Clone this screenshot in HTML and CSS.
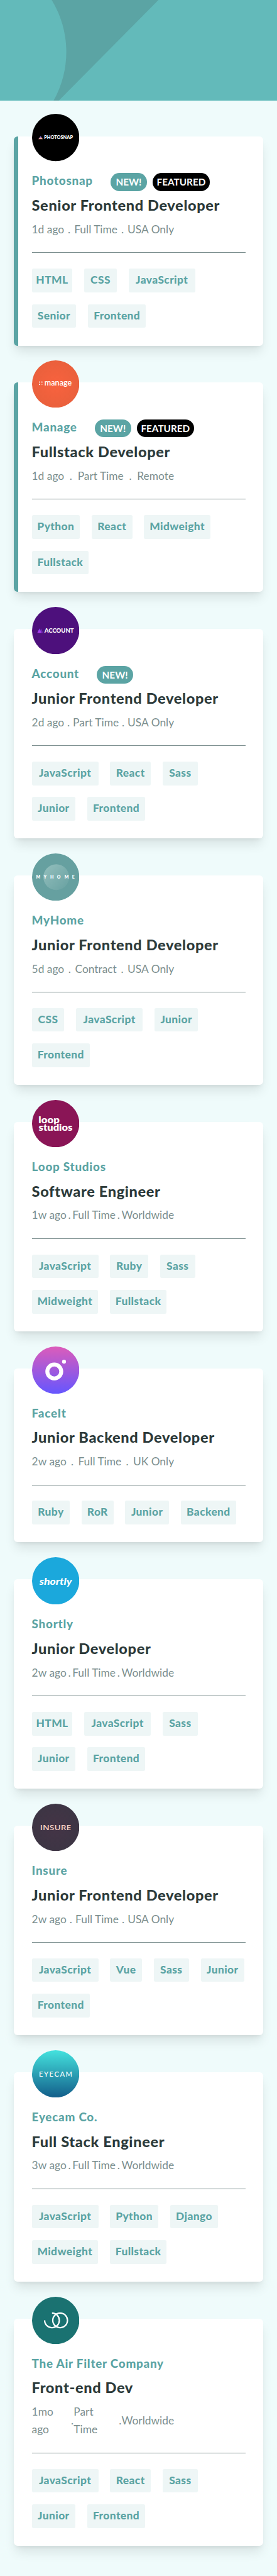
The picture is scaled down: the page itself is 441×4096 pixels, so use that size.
FILE: index.html
```html
<!DOCTYPE html>
<html lang="en">
<head>
<meta charset="utf-8">
<title>Job listings</title>
<link rel="stylesheet" href="styles.css">
</head>
<body>
<header class="hero">
  <svg class="hero-art" viewBox="0 0 750 272" preserveAspectRatio="none"><path d="M140 0A268.5 268.5 0 0 1 145 272H159L429 0Z" fill="#5ba4a4"/></svg>
</header>
<main class="list">

<article class="card featured">
  <svg class="logo" viewBox="0 0 128 128">
    <defs><linearGradient id="ps" x1="0" y1="0" x2="0.3" y2="1"><stop offset=".2" stop-color="#5a6ee0"/><stop offset=".6" stop-color="#b678c0"/><stop offset="1" stop-color="#ffb58a"/></linearGradient></defs>
    <circle cx="64" cy="64" r="64"/><path d="M17.3 68.3L23.2 59.8L29 68.3Z" fill="url(#ps)"/>
    <text class="lt" x="32.6" y="68.3" font-size="12.4" font-weight="900" textLength="78" lengthAdjust="spacingAndGlyphs">PHOTOSNAP</text>
  </svg>
  <div class="company"><span class="name">Photosnap</span><span class="badge new">NEW!</span><span class="badge hot">FEATURED</span></div>
  <h2 class="title">Senior Frontend Developer</h2>
  <div class="meta"><span>1d ago</span><span>.</span><span>Full Time</span><span>.</span><span>USA Only</span></div>
  <div class="tags"><span class="tag html">HTML</span><span class="tag css">CSS</span><span class="tag js">JavaScript</span><span class="tag senior">Senior</span><span class="tag front">Frontend</span></div>
</article>

<article class="card featured">
  <svg class="logo" viewBox="0 0 128 128">
    <defs><radialGradient id="mg"><stop offset="0" stop-color="#f8623e"/><stop offset="1" stop-color="#ea603c"/></radialGradient></defs>
    <circle cx="64" cy="64" r="64" fill="url(#mg)"/>
    <g fill="#fff"><circle cx="20.5" cy="58.5" r="1.7"/><circle cx="26.8" cy="58.5" r="1.7"/><circle cx="20.5" cy="65" r="1.7"/><circle cx="26.8" cy="65" r="1.7" opacity=".5"/></g>
    <text class="lt" x="33.6" y="67.5" font-size="23" font-weight="600" textLength="74" lengthAdjust="spacingAndGlyphs">manage</text>
  </svg>
  <div class="company"><span class="name">Manage</span><span class="badge new">NEW!</span><span class="badge hot">FEATURED</span></div>
  <h2 class="title">Fullstack Developer</h2>
  <div class="meta"><span>1d ago</span><span>.</span><span>Part Time</span><span>.</span><span>Remote</span></div>
  <div class="tags"><span class="tag python">Python</span><span class="tag react">React</span><span class="tag mid">Midweight</span><span class="tag full">Fullstack</span></div>
</article>

<article class="card">
  <svg class="logo" viewBox="0 0 128 128">
    <defs><linearGradient id="ac" x1="0" y1="0" x2="0" y2="1"><stop offset="0" stop-color="#7b3df0"/><stop offset="1" stop-color="#b53cf0"/></linearGradient></defs>
    <circle cx="64" cy="64" r="64" fill="#4d107c"/>
    <path d="M19 70L24.5 58.3L30 70Z" fill="#6a2bb0"/><path d="M14.3 70L20 58.3L25.5 70Z" fill="url(#ac)"/>
    <text class="lt" x="33.6" y="69.9" font-size="16.4" font-weight="900" textLength="79.5" lengthAdjust="spacingAndGlyphs">ACCOUNT</text>
  </svg>
  <div class="company"><span class="name">Account</span><span class="badge new">NEW!</span></div>
  <h2 class="title">Junior Frontend Developer</h2>
  <div class="meta"><span>2d ago</span><span>.</span><span>Part Time</span><span>.</span><span>USA Only</span></div>
  <div class="tags"><span class="tag js">JavaScript</span><span class="tag react">React</span><span class="tag sass">Sass</span><span class="tag junior">Junior</span><span class="tag front">Frontend</span></div>
</article>

<article class="card">
  <svg class="logo" viewBox="0 0 128 128">
    <defs><linearGradient id="mh" x1="0" y1="0" x2="1" y2="1"><stop offset="0" stop-color="#94bfbd"/><stop offset="1" stop-color="#68a1a1"/></linearGradient></defs>
    <circle cx="64" cy="64" r="64" fill="#66a0a0"/><circle cx="65.5" cy="64" r="34.8" fill="url(#mh)"/>
    <text class="lt" x="11 31.5 49.5 67.5 88 108.5" y="68.3" font-size="11.7" font-weight="800">MYHOME</text>
  </svg>
  <div class="company"><span class="name">MyHome</span></div>
  <h2 class="title">Junior Frontend Developer</h2>
  <div class="meta"><span>5d ago</span><span>.</span><span>Contract</span><span>.</span><span>USA Only</span></div>
  <div class="tags"><span class="tag css">CSS</span><span class="tag js">JavaScript</span><span class="tag junior">Junior</span><span class="tag front">Frontend</span></div>
</article>

<article class="card">
  <svg class="logo" viewBox="0 0 128 128">
    <circle cx="64" cy="64" r="64" fill="#8a1556"/>
    <text class="lt" x="17.5" y="63.3" font-size="27" font-weight="800" textLength="57" lengthAdjust="spacingAndGlyphs">loop</text>
    <text class="lt" x="18" y="83.8" font-size="27" font-weight="800" textLength="91.5" lengthAdjust="spacingAndGlyphs">studios</text>
  </svg>
  <div class="company"><span class="name">Loop Studios</span></div>
  <h2 class="title">Software Engineer</h2>
  <div class="meta"><span>1w ago</span><span>.</span><span>Full Time</span><span>.</span><span>Worldwide</span></div>
  <div class="tags"><span class="tag js">JavaScript</span><span class="tag ruby">Ruby</span><span class="tag sass">Sass</span><span class="tag mid">Midweight</span><span class="tag full">Fullstack</span></div>
</article>

<article class="card">
  <svg class="logo" viewBox="0 0 128 128">
    <defs><linearGradient id="fi" x1="0" y1="0" x2="0" y2="1"><stop offset="0" stop-color="#dc5cba"/><stop offset="1" stop-color="#6556ff"/></linearGradient></defs>
    <circle cx="64" cy="64" r="64" fill="url(#fi)"/><circle cx="60.2" cy="67.6" r="18.8" fill="none" stroke="#fff" stroke-width="10.7"/><circle cx="86.6" cy="41.2" r="5.3" fill="#fff"/>
  </svg>
  <div class="company"><span class="name">FaceIt</span></div>
  <h2 class="title">Junior Backend Developer</h2>
  <div class="meta"><span>2w ago</span><span>.</span><span>Full Time</span><span>.</span><span>UK Only</span></div>
  <div class="tags"><span class="tag ruby">Ruby</span><span class="tag ror">RoR</span><span class="tag junior">Junior</span><span class="tag back">Backend</span></div>
</article>

<article class="card">
  <svg class="logo" viewBox="0 0 128 128">
    <circle cx="64" cy="64" r="64" fill="#1ba8dc"/>
    <text class="lt" x="20" y="74.2" font-size="25" font-weight="900" font-style="italic" textLength="88" lengthAdjust="spacingAndGlyphs">shortly</text>
  </svg>
  <div class="company"><span class="name">Shortly</span></div>
  <h2 class="title">Junior Developer</h2>
  <div class="meta"><span>2w ago</span><span>.</span><span>Full Time</span><span>.</span><span>Worldwide</span></div>
  <div class="tags"><span class="tag html">HTML</span><span class="tag js">JavaScript</span><span class="tag sass">Sass</span><span class="tag junior">Junior</span><span class="tag front">Frontend</span></div>
</article>

<article class="card">
  <svg class="logo" viewBox="0 0 128 128">
    <defs><radialGradient id="in"><stop offset="0" stop-color="#443446"/><stop offset="1" stop-color="#3d3544"/></radialGradient></defs>
    <circle cx="64" cy="64" r="64" fill="url(#in)"/>
    <text class="lt insure" x="21.8" y="71" font-size="17.4" font-weight="600" textLength="84" lengthAdjust="spacingAndGlyphs">INSURE</text>
  </svg>
  <div class="company"><span class="name">Insure</span></div>
  <h2 class="title">Junior Frontend Developer</h2>
  <div class="meta"><span>2w ago</span><span>.</span><span>Full Time</span><span>.</span><span>USA Only</span></div>
  <div class="tags"><span class="tag js">JavaScript</span><span class="tag vue">Vue</span><span class="tag sass">Sass</span><span class="tag junior">Junior</span><span class="tag front">Frontend</span></div>
</article>

<article class="card">
  <svg class="logo" viewBox="0 0 128 128">
    <defs><linearGradient id="ey" x1="0" y1="0" x2="0" y2="1"><stop offset="0" stop-color="#44e2de"/><stop offset="1" stop-color="#125e8a"/></linearGradient></defs>
    <circle cx="64" cy="64" r="64" fill="url(#ey)"/>
    <text class="lt" x="18.7" y="70.7" font-size="19" font-weight="500" textLength="90">EYECAM</text>
  </svg>
  <div class="company"><span class="name">Eyecam Co.</span></div>
  <h2 class="title">Full Stack Engineer</h2>
  <div class="meta"><span>3w ago</span><span>.</span><span>Full Time</span><span>.</span><span>Worldwide</span></div>
  <div class="tags"><span class="tag js">JavaScript</span><span class="tag python">Python</span><span class="tag django">Django</span><span class="tag mid">Midweight</span><span class="tag full">Fullstack</span></div>
</article>

<article class="card">
  <svg class="logo" viewBox="0 0 128 128">
    <circle cx="64" cy="64" r="64" fill="#1a7271"/>
    <g fill="none" stroke="#fff" stroke-width="3.8"><circle cx="76" cy="63.8" r="19.9"/><path d="M34.1 63.8A19.9 19.9 0 1 0 54 43.9"/></g>
  </svg>
  <div class="company"><span class="name">The Air Filter Company</span></div>
  <h2 class="title">Front-end Dev</h2>
  <div class="meta"><span class="when">1mo<br>ago</span><span>.</span><span class="kind">Part<br>Time</span><span>.</span><span>Worldwide</span></div>
  <div class="tags"><span class="tag js">JavaScript</span><span class="tag react">React</span><span class="tag sass">Sass</span><span class="tag junior">Junior</span><span class="tag front">Frontend</span></div>
</article>

</main>
</body>
</html>
```
FILE: styles.css
```css
/* 1rem is ten design pixels */
html { font-size: 5.885px; }
* { box-sizing: border-box; }
body {
  margin: 0;
  background: #effbfb;
  font-family: Lato, "Open Sans", sans-serif;
  color: #2c3a3a;
}
.hero { height: 27.2rem; background: #63baba; }
.hero-art { display: block; width: 100%; height: 100%; }
.list {
  display: flex;
  flex-direction: column;
  gap: 10rem;
  padding: 9.6rem 3.8rem 7.9rem;
}
.card {
  position: relative;
  padding: 10rem 4.8rem 4.8rem;
  border-radius: 1rem;
  background: #fff;
  box-shadow: 0 2rem 3rem -.6rem rgba(0, 0, 0, .1), 0 .8rem 1.2rem -.8rem rgba(0, 0, 0, .1);
}
.featured { border-left: 1.2rem solid #5ba4a4; padding-left: 3.6rem; }
.logo {
  position: absolute;
  top: -6rem;
  left: 4.8rem;
  width: 12.8rem;
  height: 12.8rem;
}
.featured .logo { left: 3.6rem; }
.lt { fill: #fff; font-family: Lato, sans-serif; }
.insure { fill: #f3cfc4; font-family: "Open Sans", sans-serif; }

.company { display: flex; height: 4.8rem; }
.name {
  margin-right: 4.8rem;
  font-size: 3.2rem;
  font-weight: 900;
  line-height: 4rem;
  letter-spacing: .13rem;
  color: #5ba4a4;
  white-space: nowrap;
}
.badge {
  height: 4.8rem;
  margin-right: 1.6rem;
  border-radius: 2.4rem;
  font-size: 2.6rem;
  font-weight: 700;
  line-height: 4.9rem;
  text-align: center;
  color: #fff;
}
.new { width: 9.8rem; background: #5ba4a4; }
.hot { width: 15.4rem; background: #000; }

.title {
  margin: 1.45rem 0 1.8rem;
  font-size: 4rem;
  font-weight: 900;
  line-height: 4.8rem;
  letter-spacing: .11rem;
  white-space: nowrap;
}
.meta {
  display: flex;
  justify-content: space-between;
  align-items: center;
  width: 38.5rem;
  font-size: 2.95rem;
  line-height: 4.8rem;
  color: #7b8e8e;
  white-space: nowrap;
}
.when { width: 10.6rem; }
.kind { width: 12.2rem; }

.tags {
  display: flex;
  flex-wrap: wrap;
  gap: 3.2rem;
  width: 57.8rem;
  margin-top: 3.75rem;
  padding-top: 4.23rem;
  border-top: 1px solid #7b8e8e;
}
.tag {
  height: 6.4rem;
  border-radius: .4rem;
  background: #eef6f6;
  font-size: 2.95rem;
  font-weight: 900;
  line-height: 6.1rem;
  letter-spacing: .07rem;
  text-align: center;
  color: #5ba4a4;
}
.html, .react { width: 11rem; }
.css { width: 8.8rem; }
.js { width: 18rem; }
.mid { width: 17.9rem; }
.senior { width: 12rem; }
.junior { width: 11.8rem; }
.front { width: 15.7rem; }
.python, .django { width: 13rem; }
.full { width: 15.4rem; }
.sass { width: 9.5rem; }
.ruby { width: 10.3rem; }
.ror, .vue { width: 8.6rem; }
.back { width: 15rem; }
```
